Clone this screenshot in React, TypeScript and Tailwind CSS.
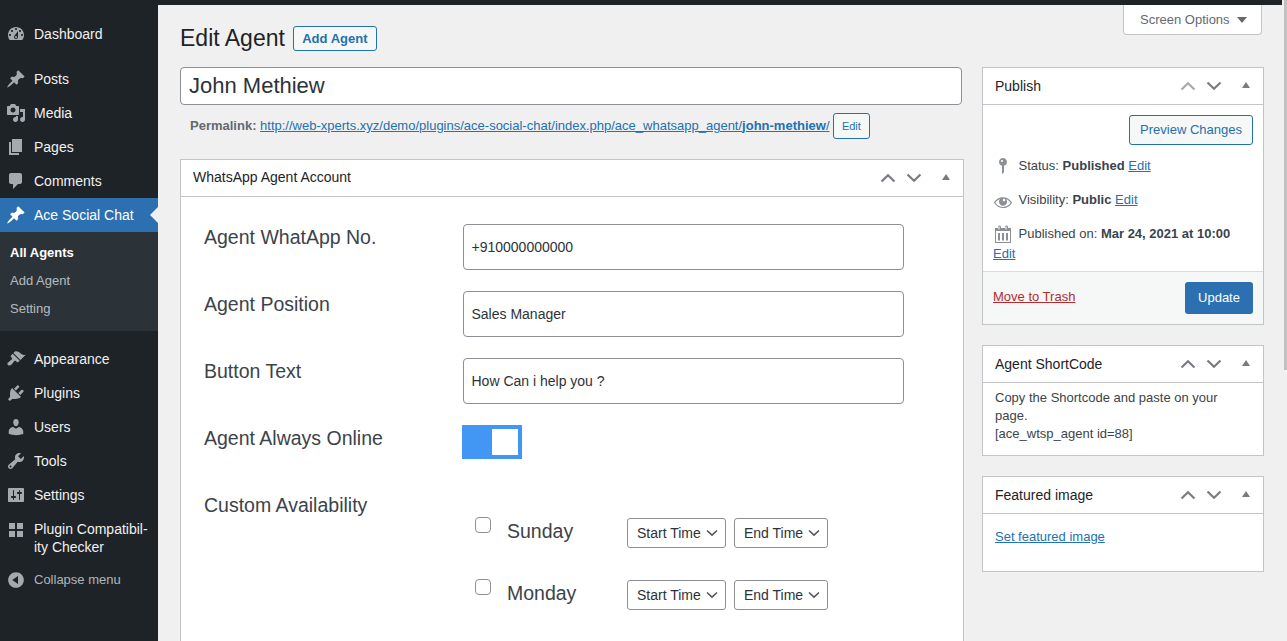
import React from "react";

const P: Record<string, string> = {
  dashboard: "M3.76 16h12.48c1.1-1.37 1.76-3.11 1.76-5 0-4.42-3.58-8-8-8s-8 3.58-8 8c0 1.89.66 3.63 1.76 5zM10 4c.55 0 1 .45 1 1s-.45 1-1 1-1-.45-1-1 .45-1 1-1zM6 6c.55 0 1 .45 1 1s-.45 1-1 1-1-.45-1-1 .45-1 1-1zm8 0c.55 0 1 .45 1 1s-.45 1-1 1-1-.45-1-1 .45-1 1-1zm-5.37 5.55L12 7v6c0 1.1-.9 2-2 2s-2-.9-2-2c0-.57.24-1.08.63-1.45zM4 10c.55 0 1 .45 1 1s-.45 1-1 1-1-.45-1-1 .45-1 1-1zm12 0c.55 0 1 .45 1 1s-.45 1-1 1-1-.45-1-1 .45-1 1-1zm-5 3c0-.55-.45-1-1-1s-1 .45-1 1 .45 1 1 1 1-.45 1-1z",
  pin: "M10.44 3.02l1.82-1.82 6.36 6.35-1.83 1.82c-1.05-.68-2.48-.57-3.41.36l-.75.75c-.92.93-1.04 2.35-.35 3.41l-1.83 1.82-2.41-2.41-2.8 2.79c-.42.42-3.38 2.71-3.8 2.29s1.86-3.39 2.28-3.81l2.79-2.79L4.1 9.36l1.83-1.82c1.05.69 2.48.57 3.4-.36l.75-.75c.93-.92 1.05-2.35.36-3.41z",
  media: "M13 11V4c0-.55-.45-1-1-1h-1.67L9 1H5L3.67 3H2c-.55 0-1 .45-1 1v7c0 .55.45 1 1 1h10c.55 0 1-.45 1-1zM7 4.5c1.38 0 2.5 1.12 2.5 2.5S8.38 9.5 7 9.5 4.5 8.38 4.5 7 5.62 4.5 7 4.5zM14 6h5v10.5c0 1.38-1.12 2.5-2.5 2.5S14 17.88 14 16.5s1.12-2.5 2.5-2.5c.17 0 .34.02.5.05V9h-3V6zm-4 8.05V13h2v3.5c0 1.38-1.12 2.5-2.5 2.5S7 17.88 7 16.5 8.12 14 9.5 14c.17 0 .34.02.5.05z",
  pages: "M6 15V2h10v13H6zm-1 1h8v2H3V5h2v11z",
  comments: "M5 2h9c1.1 0 2 .9 2 2v7c0 1.1-.9 2-2 2h-2l-5 5v-5H5c-1.1 0-2-.9-2-2V4c0-1.1.9-2 2-2z",
  appearance: "M14.48 11.06L7.41 3.99l1.5-1.5c.5-.56 2.3-.47 3.51.32 1.21.8 1.43 1.28 2.91 2.1 1.18.64 2.45 1.26 4.45.85zm-.71.71L6.7 4.7 4.93 6.47c-.39.39-.39 1.02 0 1.41l1.06 1.06c.39.39.39 1.03 0 1.42-.6.6-1.43 1.11-2.21 1.69-.35.26-.7.53-1.01.84C1.43 13.23.91 14.75 1.95 16c1.03 1.05 2.57.52 3.91-.81.31-.31.58-.66.84-1.01.58-.78 1.09-1.61 1.69-2.21.39-.39 1.02-.39 1.41 0l1.06 1.06c.39.39 1.02.39 1.41 0z",
  plugins: "M13.11 4.36L9.87 7.6 8 5.73l3.24-3.24c.35-.34 1.05-.2 1.56.32.52.51.66 1.21.31 1.55zm-8 1.77l.91-1.12 9.01 9.01-1.19.84c-.71.71-2.63 1.16-3.82 1.16H6.14L4.9 17.26c-.59.59-1.54.59-2.12 0-.59-.58-.59-1.53 0-2.12l1.24-1.24v-3.88c0-1.13.4-3.19 1.09-3.89zm7.26 3.97l3.24-3.24c.34-.35 1.04-.21 1.55.31.52.51.66 1.21.31 1.55l-3.24 3.25z",
  users: "M10 9.25c-2.27 0-2.73-3.44-2.73-3.44C7 4.02 7.82 2 9.97 2c2.16 0 2.98 2.02 2.71 3.81 0 0-.41 3.44-2.68 3.44zm0 2.57L12.72 10c2.39 0 4.52 2.33 4.52 4.53v2.49s-3.65 1.13-7.24 1.13c-3.65 0-7.24-1.13-7.24-1.13v-2.49c0-2.25 1.94-4.48 4.47-4.48z",
  tools: "M16.68 9.77c-1.34 1.34-3.3 1.67-4.95.99l-5.41 6.52c-.99.99-2.59.99-3.58 0s-.99-2.59 0-3.57l6.52-5.42c-.68-1.65-.35-3.61.99-4.95 1.28-1.28 3.12-1.62 4.72-1.06l-2.89 2.89 2.82 2.82 2.86-2.87c.53 1.58.18 3.39-1.08 4.65zM3.81 16.21c.4.39 1.04.39 1.43 0 .4-.4.4-1.04 0-1.43-.39-.4-1.03-.4-1.43 0-.39.39-.39 1.03 0 1.43z",
  settings: "M18 16V4c0-.55-.45-1-1-1H3c-.55 0-1 .45-1 1v12c0 .55.45 1 1 1h14c.55 0 1-.45 1-1zM8 11h1c.55 0 1 .45 1 1s-.45 1-1 1H8v1.5c0 .28-.22.5-.5.5s-.5-.22-.5-.5V13H6c-.55 0-1-.45-1-1s.45-1 1-1h1V5.5c0-.28.22-.5.5-.5s.5.22.5.5V11zm5-2h-1c-.55 0-1-.45-1-1s.45-1 1-1h1V5.5c0-.28.22-.5.5-.5s.5.22.5.5V7h1c.55 0 1 .45 1 1s-.45 1-1 1h-1v5.5c0 .28-.22.5-.5.5s-.5-.22-.5-.5V9z",
  grid: "M9 9V3H3v6h6zm8 0V3h-6v6h6zm-8 8v-6H3v6h6zm8 0v-6h-6v6h6z",
  collapse: "M10 2.16c4.33 0 7.84 3.51 7.84 7.84s-3.51 7.84-7.84 7.84S2.16 14.33 2.16 10 5.71 2.16 10 2.16zm2 11.72V6.12L6.18 9.97z",
  status: "M14 6c0 1.86-1.28 3.41-3 3.86V16c0 1-2 2-2 2V9.86c-1.72-.45-3-2-3-3.86 0-2.21 1.79-4 4-4s4 1.79 4 4zM8 5c0 .55.45 1 1 1s1-.45 1-1-.45-1-1-1-1 .45-1 1z",
  eye: "M18.3 9.5C15 4.9 8.5 3.8 3.9 7.2c-1.2.9-2.2 2.1-3 3.4.2.4.5.8.8 1.2 3.3 4.6 9.6 5.6 14.2 2.4.9-.7 1.7-1.4 2.4-2.4.3-.4.5-.8.8-1.2-.3-.4-.5-.8-.8-1.1zm-8.2-2.3c.5-.5 1.3-.5 1.8 0s.5 1.3 0 1.8-1.3.5-1.8 0c-.5-.4-.5-1.3 0-1.8zm-.1 7.7c-3.1 0-6-1.6-7.7-4.2C3.5 9 5.1 7.8 7 7c-.7.8-1 1.7-1 2.7 0 2.2 1.7 4.1 4 4.1 2.2 0 4.1-1.7 4.1-4 0-1-.4-2-1-2.7 1.9.8 3.4 2 4.5 3.7-1.7 2.6-4.6 4.2-7.6 4.1z",
  calendar: "M15 4h3v15H2V4h3V3c0-.41.15-.76.44-1.06.29-.29.65-.44 1.06-.44s.77.15 1.06.44c.29.3.44.65.44 1.06v1h4V3c0-.41.15-.76.44-1.06.29-.29.65-.44 1.06-.44s.77.15 1.06.44c.29.3.44.65.44 1.06v1zM6 5.5c.41 0 .5-.09.5-.5V3c0-.41-.09-.5-.5-.5s-.5.09-.5.5v2c0 .41.09.5.5.5zm7 0c.41 0 .5-.09.5-.5V3c0-.41-.09-.5-.5-.5s-.5.09-.5.5v2c0 .41.09.5.5.5zM3 18h14V7H3v11zm2-9h2v7.5H5V9zm4 0h2v7.5H9V9zm4 0h2v7.5h-2V9z",
};

function Dash({ name, className }: { name: string; className: string }) {
  return (
    <svg viewBox="0 0 20 20" className={className} fill="currentColor" fillRule={name === "calendar" ? "evenodd" : "nonzero"}>
      <path d={P[name]} />
    </svg>
  );
}

function MenuItem({ icon, label, active }: { icon: string; label: React.ReactNode; active?: boolean }) {
  return (
    <div className={`relative flex items-center h-[34px] ${active ? "bg-[#2c70b1] text-white" : "text-[#f0f0f1]"}`}>
      <div className="w-[34px] shrink-0 flex justify-center pr-[2px]">
        <Dash name={icon} className={`w-5 h-5 ${active ? "text-white" : "text-[#a7aaad]"}`} />
      </div>
      <span className="text-[14px] leading-[18px]">{label}</span>
      {active && (
        <span className="absolute right-0 top-[9px] w-0 h-0 border-y-[8px] border-y-transparent border-r-[8px] border-r-[#f0f0f1]" />
      )}
    </div>
  );
}

function Sidebar() {
  return (
    <aside className="w-[158px] shrink-0 bg-[#1d2327] h-[636px] pt-[12px]">
      <MenuItem icon="dashboard" label="Dashboard" />
      <div className="h-[11px]" />
      <MenuItem icon="pin" label="Posts" />
      <MenuItem icon="media" label="Media" />
      <MenuItem icon="pages" label="Pages" />
      <MenuItem icon="comments" label="Comments" />
      <MenuItem icon="pin" label="Ace Social Chat" active />
      <div className="bg-[#2c3338] h-[99px] pt-[7px] pb-[8px] pl-[10px] text-[13px] leading-[28px]">
        <div className="font-bold text-white">All Agents</div>
        <div className="text-[#f0f6fcb3]">Add Agent</div>
        <div className="text-[#f0f6fcb3]">Setting</div>
      </div>
      <div className="h-[11px]" />
      <MenuItem icon="appearance" label="Appearance" />
      <MenuItem icon="plugins" label="Plugins" />
      <MenuItem icon="users" label="Users" />
      <MenuItem icon="tools" label="Tools" />
      <MenuItem icon="settings" label="Settings" />
      <div className="flex h-[50px] pt-[8px] text-[#f0f0f1]">
        <div className="w-[34px] shrink-0 flex justify-center pr-[2px]">
          <Dash name="grid" className="w-5 h-5 text-[#a7aaad]" />
        </div>
        <span className="text-[14px] leading-[18px]">
          Plugin Compatibil-
          <br />
          ity Checker
        </span>
      </div>
      <div className="flex items-center h-[34px] pt-[2px] text-[#f0f6fcb3]">
        <div className="w-[34px] shrink-0 flex justify-center pr-[2px]">
          <Dash name="collapse" className="w-5 h-5 text-[#a7aaad]" />
        </div>
        <span className="text-[13px] leading-[18px]">Collapse menu</span>
      </div>
    </aside>
  );
}

function BoxControls({ upFaded }: { upFaded?: boolean }) {
  return (
    <div className="flex items-center">
      <svg viewBox="0 0 16 10" className="w-[16px] h-[10px]" fill="none" strokeWidth="2.2">
        <path d="M1.5 8.5 L8 2.2 L14.5 8.5" stroke={upFaded ? "#a7aaad" : "#787c82"} />
      </svg>
      <svg viewBox="0 0 16 10" className="w-[16px] h-[10px] ml-[10px]" fill="none" strokeWidth="2.2">
        <path d="M1.5 1.5 L8 7.8 L14.5 1.5" stroke="#787c82" />
      </svg>
      <span className="ml-[20px] w-0 h-0 border-x-[4.5px] border-x-transparent border-b-[6px] border-b-[#787c82] -mt-[3px]" />
    </div>
  );
}

function SideBox({ title, upFaded, children }: { title: string; upFaded?: boolean; children: React.ReactNode }) {
  return (
    <section className="bg-white border border-[#c3c4c7]">
      <header className="h-[36px] flex items-center justify-between pl-[12px] pr-[13px] border-b border-[#c3c4c7] box-content">
        <h2 className="text-[14px] text-[#1d2327]">{title}</h2>
        <BoxControls upFaded={upFaded} />
      </header>
      {children}
    </section>
  );
}

function Field({ label, value }: { label: string; value: string }) {
  return (
    <div className="flex h-[46px] mb-[21px]">
      <label className="w-[259px] shrink-0 text-[19.5px] leading-[26px] text-[#3c434a]">{label}</label>
      <input
        readOnly
        defaultValue={value}
        className="w-[441px] h-[46px] pl-[7.5px] pr-[8px] bg-white border border-[#8c8f94] rounded-[4px] text-[14px] text-[#2c3338] outline-none"
      />
    </div>
  );
}

function Sel({ label, w }: { label: string; w: string }) {
  return (
    <div className={`${w} h-[30px] flex items-center justify-between pl-[9px] pr-[7px] bg-white border border-[#8c8f94] rounded-[3px] text-[14px] text-[#2c3338]`}>
      <span>{label}</span>
      <svg viewBox="0 0 12 8" className="w-[12px] h-[8px]" fill="none" stroke="#50575e" strokeWidth="1.6">
        <path d="M1 1.5 L6 6.2 L11 1.5" />
      </svg>
    </div>
  );
}

function Day({ day }: { day: string }) {
  return (
    <div className="flex h-[62px]">
      <input type="checkbox" className="appearance-none w-[16px] h-[16px] ml-[12px] -mt-[1px] shrink-0 bg-white border border-[#8c8f94] rounded-[4px]" />
      <span className="w-[120px] ml-[16px] text-[19.5px] leading-[26px] text-[#3c434a]">{day}</span>
      <div className="flex gap-[8px] h-[30px]">
        <Sel label="Start Time" w="w-[99px]" />
        <Sel label="End Time" w="w-[94px]" />
      </div>
    </div>
  );
}

function MetaLine({ icon, iconClass, children, className }: { icon: string; iconClass: string; children: React.ReactNode; className?: string }) {
  return (
    <div className={`flex items-start text-[13px] leading-[18px] text-[#3c434a] ${className ?? ""}`}>
      <span className="w-[27.5px] shrink-0 flex justify-center h-[18px] items-center -ml-[4px] mr-[2px]">
        <Dash name={icon} className={iconClass} />
      </span>
      <span>{children}</span>
    </div>
  );
}

const Lnk = ({ children }: { children: React.ReactNode }) => <a className="text-[#2271b1] underline">{children}</a>;

export default function App() {
  return (
    <div className="relative h-[641px] w-[1287px] overflow-hidden bg-[#f0f0f1] font-['Liberation_Sans',Arial,sans-serif]">
      <div className="h-[5px] w-[1282px] bg-[#1d2327]" />
      <div className="flex">
        <Sidebar />
        <main className="flex-1 pl-[22px]">
          <div className="flex gap-[18px]">
            <div className="w-[784px] shrink-0">
              <div className="flex items-center h-[25px] mt-[21px]">
                <h1 className="text-[23px] leading-[29px] text-[#1d2327]">Edit Agent</h1>
                <a className="ml-[8px] h-[25px] w-[84px] flex items-center justify-center border border-[#2271b1] rounded-[3px] bg-[#f6f7f7] text-[13px] font-bold text-[#2271b1]">
                  Add Agent
                </a>
              </div>
              <input
                readOnly
                defaultValue="John Methiew"
                className="block w-[782px] h-[38px] mt-[16px] px-[8px] bg-white border border-[#8c8f94] rounded-[4px] text-[22px] text-[#2c3338] outline-none"
              />
              <div className="flex items-center h-[26px] mt-[8px] pl-[10px] text-[13px] text-[#646970]">
                <b>Permalink:</b>
                <a className="ml-[3.6px] text-[#2271b1] underline">
                  http://web-xperts.xyz/demo/plugins/ace-social-chat/index.php/ace_whatsapp_agent/<b>john-methiew</b>/
                </a>
                <span className="ml-[3.4px] w-[37px] h-[26px] flex items-center justify-center border border-[#2271b1] rounded-[3px] bg-[#f6f7f7] text-[11px] text-[#2271b1]">
                  Edit
                </span>
              </div>
              <section className="mt-[20px] bg-white border border-[#c3c4c7] h-[500px]">
                <header className="h-[36px] flex items-center justify-between pl-[12px] pr-[13px] border-b border-[#c3c4c7] box-content">
                  <h2 className="text-[14px] text-[#1d2327] -mt-[1px]">WhatsApp Agent Account</h2>
                  <BoxControls />
                </header>
                <div className="pl-[23px] pt-[27px]">
                  <Field label="Agent WhatApp No." value="+910000000000" />
                  <Field label="Agent Position" value="Sales Manager" />
                  <Field label="Button Text" value="How Can i help you ?" />
                  <div className="flex h-[57px]">
                    <label className="w-[258px] shrink-0 text-[19.5px] leading-[26px] text-[#3c434a]">Agent Always Online</label>
                    <div className="w-[60px] h-[34px] bg-[#4296f4] flex justify-end p-[4px]">
                      <span className="block w-[26px] h-[26px] bg-white" />
                    </div>
                  </div>
                  <label className="block h-[28px] mt-[10px] text-[19.5px] leading-[26px] text-[#3c434a]">Custom Availability</label>
                  <div className="ml-[259px] -mt-[2px]">
                    <Day day="Sunday" />
                    <Day day="Monday" />
                  </div>
                </div>
              </section>
            </div>
            <div className="w-[282px] shrink-0 flex flex-col gap-[20px] mt-[62px]">
              <SideBox title="Publish" upFaded>
                <div className="h-[166px] px-[10px] pt-[10px]">
                  <div className="flex justify-end">
                    <span className="w-[124px] h-[30px] flex items-center justify-center border border-[#2271b1] rounded-[3px] bg-[#f6f7f7] text-[13px] text-[#2271b1]">
                      Preview Changes
                    </span>
                  </div>
                  <MetaLine className="mt-[12px]" icon="status" iconClass="w-5 h-5 text-[#8c8f94]">
                    Status: <b>Published</b> <Lnk>Edit</Lnk>
                  </MetaLine>
                  <MetaLine className="mt-[16px]" icon="eye" iconClass="w-5 h-5 mt-[4px] text-[#8c8f94]">
                    Visibility: <b>Public</b> <Lnk>Edit</Lnk>
                  </MetaLine>
                  <MetaLine className="mt-[16px]" icon="calendar" iconClass="w-5 h-5 text-[#8c8f94]">
                    Published on: <b>Mar 24, 2021 at 10:00</b>
                  </MetaLine>
                  <div className="text-[13px] leading-[18px] mt-[2px]">
                    <Lnk>Edit</Lnk>
                  </div>
                </div>
                <div className="h-[52px] flex items-center justify-between pl-[10px] pr-[10px] bg-[#f6f7f7] border-t border-[#dcdcde] box-content">
                  <a className="text-[13px] text-[#b32d2e] underline -mt-[3px]">Move to Trash</a>
                  <span className="w-[68px] h-[32px] flex items-center justify-center rounded-[3px] bg-[#2c70b1] text-[13px] text-white">
                    Update
                  </span>
                </div>
              </SideBox>
              <SideBox title="Agent ShortCode">
                <div className="h-[72px] px-[12px] pt-[6px] text-[13px] leading-[18px] text-[#3c434a]">
                  Copy the Shortcode and paste on your page.
                  <br />
                  [ace_wtsp_agent id=88]
                </div>
              </SideBox>
              <SideBox title="Featured image">
                <div className="h-[57px] px-[12px] pt-[14px] text-[13px] leading-[18px]">
                  <Lnk>Set featured image</Lnk>
                </div>
              </SideBox>
            </div>
          </div>
        </main>
      </div>
      <div className="absolute right-[25px] top-[5px] w-[139px] h-[30px] flex items-center pl-[16px] gap-[7px] bg-white border border-t-0 border-[#c3c4c7] rounded-b-[4px] text-[13px] text-[#646970]">
        <span>Screen Options</span>
        <span className="w-0 h-0 border-x-[5px] border-x-transparent border-t-[6px] border-t-[#646970]" />
      </div>
      <div className="absolute right-0 top-0 w-[3px] h-[370px] bg-[#c1c1c1]" />
    </div>
  );
}
